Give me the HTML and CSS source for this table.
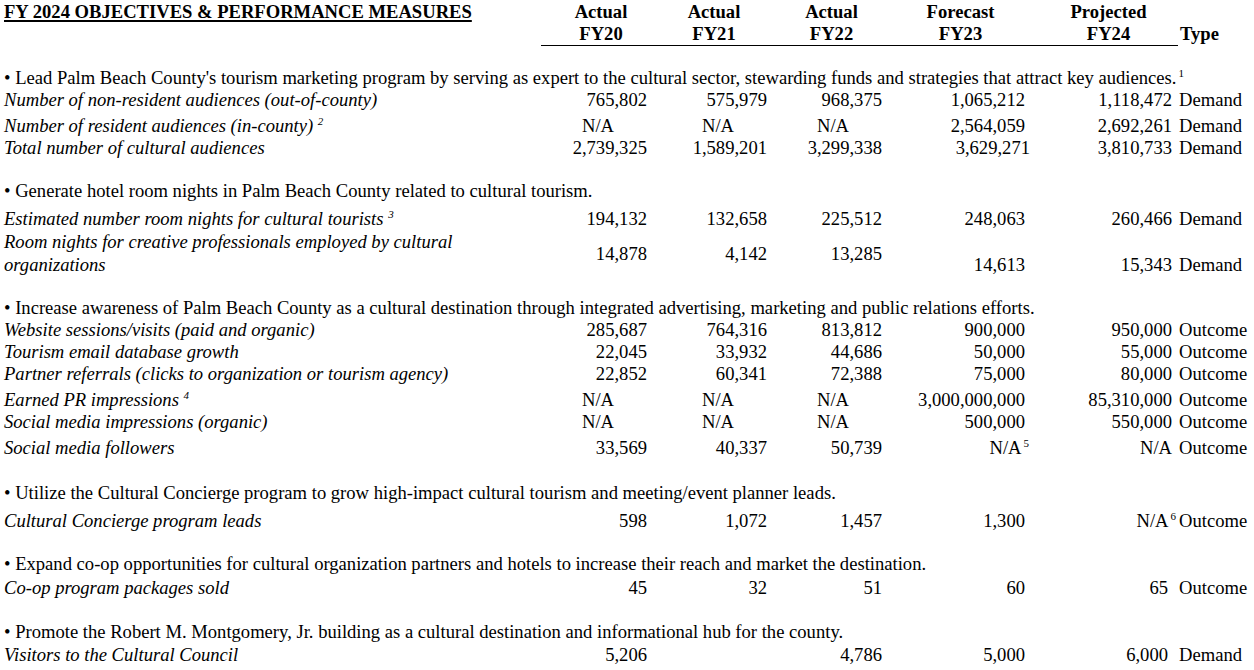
FILE: index.html
```html
<!DOCTYPE html>
<html>
<head>
<meta charset="utf-8">
<link rel="stylesheet" href="styles.css">
</head>
<body>
<div class="page">
  <div class="row head">
    <div class="title">FY 2024 OBJECTIVES &amp; PERFORMANCE MEASURES</div>
    <div class="hc">Actual<br>FY20</div>
    <div class="hc">Actual<br>FY21</div>
    <div class="hc">Actual<br>FY22</div>
    <div class="hc">Forecast<br>FY23</div>
    <div class="hc last">Projected<br>FY24</div>
    <div class="htype">Type</div>
  </div>

  <section class="sec">
    <div class="obj">• Lead Palm Beach County's tourism marketing program by serving as expert to the cultural sector, stewarding funds and strategies that attract key audiences.<sup>1</sup></div>
    <div class="row"><div class="lbl">Number of non-resident audiences (out-of-county)</div><div>765,802</div><div>575,979</div><div>968,375</div><div>1,065,212</div><div>1,118,472</div><div class="type">Demand</div></div>
    <div class="row tall"><div class="lbl">Number of resident audiences (in-county) <sup>2</sup></div><div class="na">N/A</div><div class="na">N/A</div><div class="na">N/A</div><div>2,564,059</div><div>2,692,261</div><div class="type">Demand</div></div>
    <div class="row"><div class="lbl">Total number of cultural audiences</div><div>2,739,325</div><div>1,589,201</div><div>3,299,338</div><div class="nudge-r">3,629,271</div><div>3,810,733</div><div class="type">Demand</div></div>
  </section>

  <section class="sec">
    <div class="obj">• Generate hotel room nights in Palm Beach County related to cultural tourism.</div>
    <div class="row taller"><div class="lbl">Estimated number room nights for cultural tourists <sup>3</sup></div><div>194,132</div><div>132,658</div><div>225,512</div><div>248,063</div><div>260,466</div><div class="type">Demand</div></div>
    <div class="row two"><div class="lbl">Room nights for creative professionals employed by cultural<br>organizations</div><div class="mid">14,878</div><div class="mid">4,142</div><div class="mid">13,285</div><div class="bot">14,613</div><div class="bot">15,343</div><div class="type bot">Demand</div></div>
  </section>

  <section class="sec">
    <div class="obj">• Increase awareness of Palm Beach County as a cultural destination through integrated advertising, marketing and public relations efforts.</div>
    <div class="row"><div class="lbl">Website sessions/visits (paid and organic)</div><div>285,687</div><div>764,316</div><div>813,812</div><div>900,000</div><div>950,000</div><div class="type">Outcome</div></div>
    <div class="row"><div class="lbl">Tourism email database growth</div><div>22,045</div><div>33,932</div><div>44,686</div><div>50,000</div><div>55,000</div><div class="type">Outcome</div></div>
    <div class="row"><div class="lbl">Partner referrals (clicks to organization or tourism agency)</div><div>22,852</div><div>60,341</div><div>72,388</div><div>75,000</div><div>80,000</div><div class="type">Outcome</div></div>
    <div class="row tall"><div class="lbl">Earned PR impressions <sup>4</sup></div><div class="na">N/A</div><div class="na">N/A</div><div class="na">N/A</div><div>3,000,000,000</div><div>85,310,000</div><div class="type">Outcome</div></div>
    <div class="row"><div class="lbl">Social media impressions (organic)</div><div class="na">N/A</div><div class="na">N/A</div><div class="na">N/A</div><div>500,000</div><div>550,000</div><div class="type">Outcome</div></div>
    <div class="row tall"><div class="lbl">Social media followers</div><div>33,569</div><div>40,337</div><div>50,739</div><div class="supcell">N/A<sup>5</sup></div><div>N/A</div><div class="type">Outcome</div></div>
  </section>

  <section class="sec later">
    <div class="obj">• Utilize the Cultural Concierge program to grow high-impact cultural tourism and meeting/event planner leads.</div>
    <div class="row taller"><div class="lbl">Cultural Concierge program leads</div><div>598</div><div>1,072</div><div>1,457</div><div>1,300</div><div class="supcell">N/A<sup>6</sup></div><div class="type">Outcome</div></div>
  </section>

  <section class="sec">
    <div class="obj">• Expand co-op opportunities for cultural organization partners and hotels to increase their reach and market the destination.</div>
    <div class="row mid2"><div class="lbl">Co-op program packages sold</div><div>45</div><div>32</div><div>51</div><div>60</div><div class="nudge">65</div><div class="type">Outcome</div></div>
  </section>

  <section class="sec last-sec">
    <div class="obj">• Promote the Robert M. Montgomery, Jr. building as a cultural destination and informational hub for the county.</div>
    <div class="row tiny"><div class="lbl">Visitors to the Cultural Council</div><div>5,206</div><div></div><div>4,786</div><div>5,000</div><div class="nudge">6,000</div><div class="type">Demand</div></div>
  </section>
</div>
</body>
</html>
```

FILE: styles.css
```css
html, body {
  margin: 0;
  padding: 0;
  background: #ffffff;
}

body {
  font-family: "Liberation Serif", "Times New Roman", serif;
  font-size: 18.6px;
  color: #000000;
}

.page {
  padding: 1px 0 0 4px;
  width: 1250px;
}

.row {
  display: grid;
  grid-template-columns: 537px 106px 120px 115px 143px 147px 82px;
  line-height: 22px;
  white-space: nowrap;
}

.row > div {
  text-align: right;
}

.row > .lbl {
  text-align: left;
  font-style: italic;
}

.row > .type {
  text-align: left;
  padding-left: 7px;
}

.row > .na {
  padding-right: 33px;
}

.row.tall {
  padding-top: 4px;
}

.row.taller {
  padding-top: 6px;
}

.row.mid2 {
  padding-top: 2px;
}

.row.tiny {
  padding-top: 1px;
}

.row.two {
  line-height: 23px;
}

.row > .mid {
  align-self: center;
}

.row > .bot {
  align-self: end;
}

.row > .nudge {
  padding-right: 4px;
}

.row > .nudge-r {
  margin-right: -5px;
}

.row > .supcell {
  margin-right: -4px;
}

.head {
  font-weight: bold;
}

.head > .title {
  text-align: left;
  text-decoration: underline;
  text-decoration-thickness: 1.5px;
  text-underline-offset: 2px;
}

.head > .hc {
  text-align: center;
  padding-left: 14px;
  border-bottom: 1.5px solid #000;
  height: 44px;
}

.head > .hc.last {
  margin-right: -6px;
}

.head > .htype {
  text-align: left;
  padding-left: 8px;
  align-self: end;
  line-height: 22px;
  transform: translateY(-1px);
}

.sec {
  margin-top: 21px;
}

.sec.later {
  margin-top: 23px;
}

.sec.last-sec {
  margin-top: 22px;
}

.obj {
  line-height: 22px;
  white-space: nowrap;
}

sup {
  font-size: 11px;
  line-height: 0;
  vertical-align: 7px;
  font-style: italic;
}

.obj sup,
.supcell sup {
  font-style: normal;
  margin-left: 2px;
}
```
